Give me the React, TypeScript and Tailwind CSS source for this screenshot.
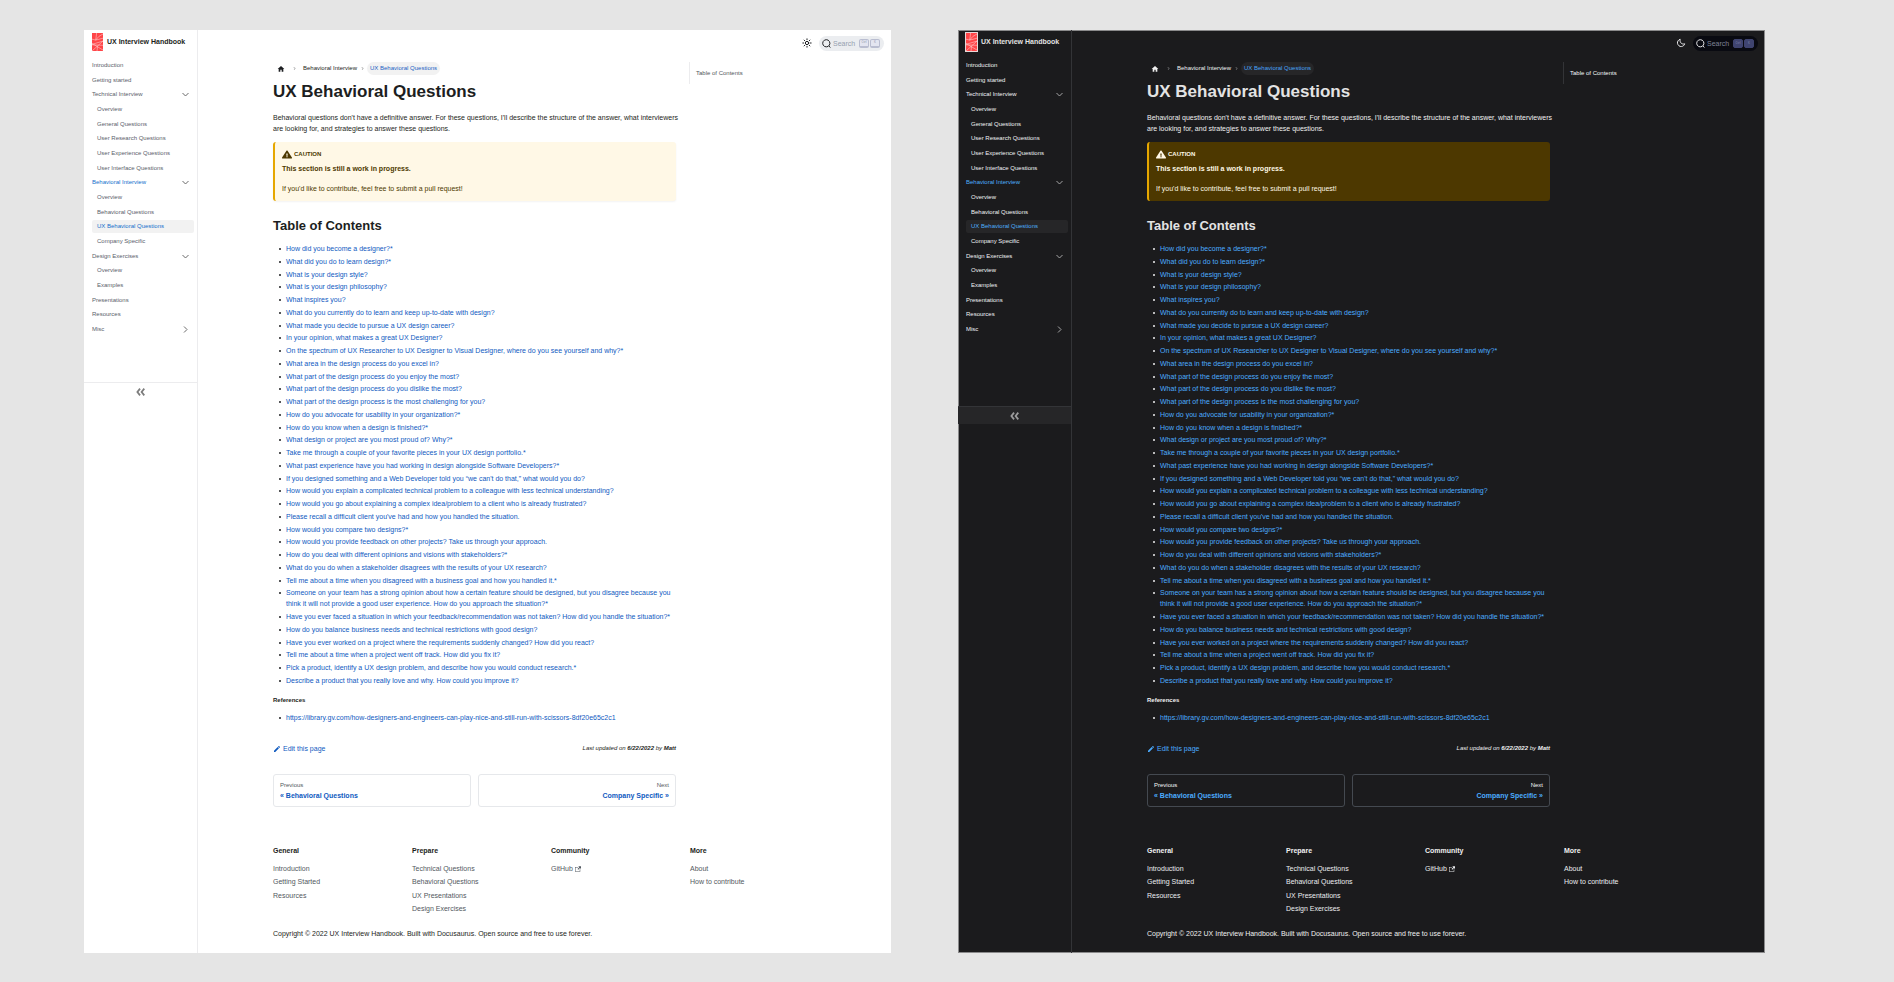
import React from "react";
import { MdHome, MdEdit } from "react-icons/md";

type Theme = {
  panel: string;
  line: string;
  text: string;
  heading: string;
  menu: string;
  active: string;
  activeBg: string;
  link: string;
  chevron: string;
  crumbBg: string;
  caution: string;
  collapseWrap: string;
  collapseIcon: string;
  search: string;
  searchIcon: string;
  searchText: string;
  key: string;
  card: string;
  label: string;
  footerLink: string;
  logo: string;
};

const light: Theme = {
  panel: "bg-white",
  line: "border-[#ececee]",
  text: "text-[#1c1e21]",
  heading: "text-[#1c1e21]",
  menu: "text-[#5a616b]",
  active: "text-[#1470cc]",
  activeBg: "bg-[#f2f2f2]",
  link: "text-[#0f5abf]",
  chevron: "text-[#6b6b6b]",
  crumbBg: "bg-[#f2f2f2] text-[#1a5fc4]",
  caution: "bg-[#fff8e6] text-[#4d3800] shadow-xs",
  collapseWrap: "mt-[45px] border-t border-[#ececee]",
  collapseIcon: "text-[#7c7c7c]",
  search: "bg-[#ebedf0]",
  searchIcon: "text-[#1c1e21]",
  searchText: "text-[#969faf]",
  key: "bg-[#e3e5f0] text-[#8d93a8] border-[#b9bdd0] border-b-2",
  card: "border-[#e6e8eb]",
  label: "text-[#525860]",
  footerLink: "text-[#525860]",
  logo: "border-transparent",
};

const dark: Theme = {
  panel: "bg-[#1b1b1d] ring-1 ring-inset ring-[#8a8a8b]",
  line: "border-[#333437]",
  text: "text-[#f0f0f0]",
  heading: "text-[#e3e3e3]",
  menu: "text-[#f0f1f3]",
  active: "text-[#4eaefa]",
  activeBg: "bg-[#262628]",
  link: "text-[#4cacff]",
  chevron: "text-[#a5a5a6]",
  crumbBg: "bg-[#262628] text-[#46a4fa]",
  caution: "bg-[#4d3800] text-[#fff8e6]",
  collapseWrap: "mt-[69px] border-t border-[#333437] bg-[#262628]",
  collapseIcon: "text-[#9c9c9d]",
  search: "bg-[#090a11]",
  searchIcon: "text-[#e8e8ea]",
  searchText: "text-[#7f8497]",
  key: "bg-[#3f4470] text-[#8389ad] border-[#3f4470]",
  card: "border-[#444950]",
  label: "text-[#f5f6f7]",
  footerLink: "text-[#ebedf0]",
  logo: "border-[#e8d8d8]",
};

type Item = { label: string; level: 1 | 2; open?: boolean; closed?: boolean; on?: boolean; current?: boolean };

const menu: Item[] = [
  { label: "Introduction", level: 1 },
  { label: "Getting started", level: 1 },
  { label: "Technical Interview", level: 1, open: true },
  { label: "Overview", level: 2 },
  { label: "General Questions", level: 2 },
  { label: "User Research Questions", level: 2 },
  { label: "User Experience Questions", level: 2 },
  { label: "User Interface Questions", level: 2 },
  { label: "Behavioral Interview", level: 1, open: true, on: true },
  { label: "Overview", level: 2 },
  { label: "Behavioral Questions", level: 2 },
  { label: "UX Behavioral Questions", level: 2, on: true, current: true },
  { label: "Company Specific", level: 2 },
  { label: "Design Exercises", level: 1, open: true },
  { label: "Overview", level: 2 },
  { label: "Examples", level: 2 },
  { label: "Presentations", level: 1 },
  { label: "Resources", level: 1 },
  { label: "Misc", level: 1, closed: true },
];

const questions: React.ReactNode[] = [
  "How did you become a designer?*",
  "What did you do to learn design?*",
  "What is your design style?",
  "What is your design philosophy?",
  "What inspires you?",
  "What do you currently do to learn and keep up-to-date with design?",
  "What made you decide to pursue a UX design career?",
  "In your opinion, what makes a great UX Designer?",
  "On the spectrum of UX Researcher to UX Designer to Visual Designer, where do you see yourself and why?*",
  "What area in the design process do you excel in?",
  "What part of the design process do you enjoy the most?",
  "What part of the design process do you dislike the most?",
  "What part of the design process is the most challenging for you?",
  "How do you advocate for usability in your organization?*",
  "How do you know when a design is finished?*",
  "What design or project are you most proud of? Why?*",
  "Take me through a couple of your favorite pieces in your UX design portfolio.*",
  "What past experience have you had working in design alongside Software Developers?*",
  "If you designed something and a Web Developer told you “we can't do that,” what would you do?",
  "How would you explain a complicated technical problem to a colleague with less technical understanding?",
  "How would you go about explaining a complex idea/problem to a client who is already frustrated?",
  "Please recall a difficult client you've had and how you handled the situation.",
  "How would you compare two designs?*",
  "How would you provide feedback on other projects? Take us through your approach.",
  "How do you deal with different opinions and visions with stakeholders?*",
  "What do you do when a stakeholder disagrees with the results of your UX research?",
  "Tell me about a time when you disagreed with a business goal and how you handled it.*",
  <>
    Someone on your team has a strong opinion about how a certain feature should be designed, but you disagree because you
    <br />
    think it will not provide a good user experience. How do you approach the situation?*
  </>,
  "Have you ever faced a situation in which your feedback/recommendation was not taken? How did you handle the situation?*",
  "How do you balance business needs and technical restrictions with good design?",
  "Have you ever worked on a project where the requirements suddenly changed? How did you react?",
  "Tell me about a time when a project went off track. How did you fix it?",
  "Pick a product, identify a UX design problem, and describe how you would conduct research.*",
  "Describe a product that you really love and why. How could you improve it?",
];

const footer = [
  { title: "General", links: ["Introduction", "Getting Started", "Resources"] },
  { title: "Prepare", links: ["Technical Questions", "Behavioral Questions", "UX Presentations", "Design Exercises"] },
  { title: "Community", links: ["GitHub"] },
  { title: "More", links: ["About", "How to contribute"] },
];

function Logo({ t }: { t: Theme }) {
  return (
    <svg viewBox="0 0 24 38" className={`h-5 w-[13px] shrink-0 border ${t.logo}`} preserveAspectRatio="none" aria-hidden="true">
      <rect width="24" height="38" fill="#ff4548" />
      <g fill="none" stroke="#ffd0d0" strokeWidth="1.2">
        <path d="M0 13 L8 15 L24 11 M10 0 Q9 10 8 15 M24 2 Q14 6 8 15" />
        <path d="M0 24 L24 17 M0 38 L24 17 M0 22 L24 36 M0 25 L24 26 M12 28 L11 38" />
      </g>
    </svg>
  );
}

function Chevron({ className }: { className: string }) {
  return (
    <svg viewBox="0 0 14 14" className={className} fill="none" stroke="currentColor" strokeWidth="2" aria-hidden="true">
      <path d="M1 4 L7 10 L13 4" />
    </svg>
  );
}

function Sidebar({ t }: { t: Theme }) {
  return (
    <aside className={`w-[114px] shrink-0 border-r ${t.line}`}>
      <a href="#" className={`mt-[2px] flex h-5 items-center gap-[3px] pl-[7px] text-[7px] font-bold whitespace-nowrap ${t.heading}`}>
        <Logo t={t} />
        UX Interview Handbook
      </a>
      <nav aria-label="Docs" className="mt-[6px] pr-[3px] pl-2">
        <ul className="grid min-h-[279px] auto-rows-fr text-[6px] leading-[13px]">
          {menu.map((m, i) => (
            <li key={i} className="flex items-center">
              <a
                href="#"
                className={`flex flex-1 items-center justify-between rounded-xs pr-[5px] whitespace-nowrap ${m.level === 2 ? "pl-[5px]" : ""} ${m.on ? t.active : t.menu} ${m.current ? t.activeBg : ""}`}
              >
                {m.label}
                {m.open && <Chevron className={`size-[7px] ${t.chevron}`} />}
                {m.closed && <Chevron className={`size-[7px] -rotate-90 ${t.chevron}`} />}
              </a>
            </li>
          ))}
        </ul>
      </nav>
      <button type="button" aria-label="Collapse sidebar" className={`flex h-[18px] w-full items-center justify-center ${t.collapseWrap}`}>
        <svg viewBox="0 0 20 18" className={`h-2 w-[9px] ${t.collapseIcon}`} fill="none" stroke="currentColor" strokeWidth="4" aria-hidden="true">
          <path d="M9 1.500 L3 9 L9 16.500 M18.500 1.500 L12.500 9 L18.500 16.500" />
        </svg>
      </button>
    </aside>
  );
}

function ModeIcon({ mode, className }: { mode: "light" | "dark"; className: string }) {
  if (mode === "light") {
    return (
      <svg viewBox="0 0 24 24" className={className} fill="none" stroke="currentColor" strokeWidth="2.4" strokeLinecap="round" aria-hidden="true">
        <circle cx="12" cy="12" r="4" />
        <path d="M12 2v2M12 20v2M2 12h2M20 12h2M5 5l1.400 1.400M17.600 17.600L19 19M5 19l1.400-1.400M17.600 6.400L19 5" />
      </svg>
    );
  }
  return (
    <svg viewBox="0 0 24 24" className={className} fill="none" stroke="currentColor" strokeWidth="2.4" strokeLinejoin="round" aria-hidden="true">
      <path d="M10 3 C5.500 4.500 3 8.500 3.500 12.500 C4.500 18 9 21 13 20.500 C17 20 20 17.500 21 14 C14 16 8.500 11 10 3 Z" />
    </svg>
  );
}

function TopBar({ t, mode }: { t: Theme; mode: "light" | "dark" }) {
  return (
    <header className="flex h-[26px] items-center justify-end gap-[7px] pr-[7px]">
      <button type="button" aria-label="Switch colour mode" className={t.searchIcon}>
        <ModeIcon mode={mode} className="size-[10px]" />
      </button>
      <button type="button" className={`flex h-[15px] w-[65px] items-center rounded-full px-[3px] ${t.search}`}>
        <svg viewBox="0 0 20 20" className={`size-[9px] ${t.searchIcon}`} fill="none" stroke="currentColor" strokeWidth="2.2" aria-hidden="true">
          <path d="M15 15 L18.500 19 M9.500 1.500 a8 8 0 1 0 .1 0 z" />
        </svg>
        <span className={`ml-[2px] text-[7px] leading-[9px] ${t.searchText}`}>Search</span>
        <span className="ml-auto flex gap-px pr-px text-[3px] leading-none">
          <kbd className={`flex h-[9px] w-[10px] items-center justify-center rounded-xs border font-sans ${t.key}`}>Ctrl</kbd>
          <kbd className={`flex h-[9px] w-[10px] items-center justify-center rounded-xs border font-sans ${t.key}`}>K</kbd>
        </span>
      </button>
    </header>
  );
}

const bulleted =
  "flex gap-[5px] before:mt-[5px] before:size-[2px] before:shrink-0 before:rounded-full before:bg-current before:content-['']";

function Article({ t }: { t: Theme }) {
  return (
    <main className="min-w-0">
      <nav aria-label="Breadcrumbs" className={`flex h-[13px] items-center text-[6px] whitespace-nowrap ${t.text}`}>
        <a href="#" aria-label="Home" className="ml-1">
          <MdHome className="size-2" />
        </a>
        <Chevron className="mr-[7px] ml-2 size-[3px] -rotate-90" />
        <a href="#">Behavioral Interview</a>
        <Chevron className="mr-[3px] ml-1 size-[3px] -rotate-90" />
        <a href="#" className={`rounded-full px-[3px] leading-[13px] ${t.crumbBg}`}>UX Behavioral Questions</a>
      </nav>
      <h1 className={`mt-[7px] text-[17px] leading-[20px] font-bold ${t.heading}`}>UX Behavioral Questions</h1>
      <p className={`mt-[10px] text-[7px] leading-[11px] whitespace-nowrap ${t.text}`}>
        Behavioral questions don't have a definitive answer. For these questions, I'll describe the structure of the answer, what interviewers
        <br />
        are looking for, and strategies to answer these questions.
      </p>
      <section className={`mt-2 rounded-[3px] border-l-2 border-[#e6a700] px-[7px] pt-[7px] pb-[7px] text-[7px] leading-[11px] ${t.caution}`}>
        <h2 className="flex items-center gap-[2px] text-[6px] font-bold">
          <svg viewBox="0 0 16 16" className="h-[9px] w-[10px]" preserveAspectRatio="none" fill="currentColor" fillRule="evenodd" aria-hidden="true">
            <path d="M8.890 1.500c-.17-.31-.5-.5-.89-.5s-.72.190-.89.500L.13 13.490a.98.980 0 0 0 0 1c.17.310.52.510.87.510h14c.36 0 .7-.190.880-.510.170-.310.170-.690 0-1L8.890 1.500zM9 13H7v-2h2v2zm0-3H7V6h2v4z" />
          </svg>
          CAUTION
        </h2>
        <p className="mt-[3px] font-bold">This section is still a work in progress.</p>
        <p className="mt-[9px]">If you'd like to contribute, feel free to submit a pull request!</p>
      </section>
      <h2 className={`mt-4 text-[13px] leading-[18px] font-bold ${t.heading}`}>Table of Contents</h2>
      <ul className={`mt-2 flex min-h-[443px] flex-col justify-between pl-[6px] text-[7px] leading-[11px] whitespace-nowrap ${t.text}`}>
        {questions.map((q, i) => (
          <li key={i} className={bulleted}>
            <a href="#" className={t.link}>{q}</a>
          </li>
        ))}
      </ul>
      <h3 className={`mt-[9px] text-[6px] leading-[11px] font-bold ${t.text}`}>References</h3>
      <ul className={`mt-[6px] pl-[6px] text-[7px] leading-[11px] ${t.text}`}>
        <li className={bulleted}>
          <a href="#" className={t.link}>https://library.gv.com/how-designers-and-engineers-can-play-nice-and-still-run-with-scissors-8df20e65c2c1</a>
        </li>
      </ul>
      <div className="mt-5 flex items-center justify-between leading-[11px]">
        <a href="#" className={`flex items-center gap-[2px] text-[7px] ${t.link}`}>
          <MdEdit className="size-2" />
          Edit this page
        </a>
        <p className={`text-[6px] italic ${t.text}`}>
          Last updated on <b>6/22/2022</b> by <b>Matt</b>
        </p>
      </div>
      <nav aria-label="Docs pages" className="mt-5 grid grid-cols-2 gap-[7px]">
        <a href="#" className={`rounded-[3px] border px-[6px] pt-[5px] pb-1 leading-[11px] ${t.card}`}>
          <span className={`block text-[6px] leading-[10px] ${t.label}`}>Previous</span>
          <span className={`block pb-px text-[7px] font-bold ${t.link}`}>« Behavioral Questions</span>
        </a>
        <a href="#" className={`rounded-[3px] border px-[6px] pt-[5px] pb-1 text-right leading-[11px] ${t.card}`}>
          <span className={`block text-[6px] leading-[10px] ${t.label}`}>Next</span>
          <span className={`block pb-px text-[7px] font-bold ${t.link}`}>Company Specific »</span>
        </a>
      </nav>
    </main>
  );
}

function Footer({ t }: { t: Theme }) {
  return (
    <footer className="mt-[38px] text-[7px]">
      <div className="grid grid-cols-4">
        {footer.map((c) => (
          <div key={c.title}>
            <h2 className={`leading-[12px] font-bold ${t.text}`}>{c.title}</h2>
            <ul className="mt-[5px] grid min-h-[54px] auto-rows-min content-start">
              {c.links.map((l, i) => (
                <li key={l} className={i % 2 === 1 ? "leading-[14px]" : "leading-[13px]"}>
                  <a href="#" className={`inline-flex items-center gap-[2px] ${t.footerLink}`}>
                    {l}
                    {l === "GitHub" && (
                      <svg viewBox="0 0 24 24" className="size-[6px]" fill="currentColor" aria-hidden="true">
                        <path d="M21 13v10h-21v-19h12v2h-10v15h17v-8h2zm3-12h-10.988l4.035 4-6.977 7.070 2.828 2.828 6.977-7.070 4.125 4.172v-11z" />
                      </svg>
                    )}
                  </a>
                </li>
              ))}
            </ul>
          </div>
        ))}
      </div>
      <p className={`mt-3 leading-[12px] ${t.text}`}>
        Copyright © 2022 UX Interview Handbook. Built with Docusaurus. Open source and free to use forever.
      </p>
    </footer>
  );
}

function Page({ t, mode }: { t: Theme; mode: "light" | "dark" }) {
  return (
    <div className={`flex flex-1 ${t.panel}`}>
      <Sidebar t={t} />
      <div className="min-w-0 flex-1 pb-[13px]">
        <TopBar t={t} mode={mode} />
        <div className="mt-[6px] pr-[62px] pl-[75px]">
          <div className="grid grid-cols-[403fr_140fr] gap-[13px]">
            <Article t={t} />
            <nav aria-label="On this page" className={`h-[22px] border-l pl-[6px] text-[6px] leading-[22px] ${t.line}`}>
              <a href="#" className={t.label}>Table of Contents</a>
            </nav>
          </div>
          <Footer t={t} />
        </div>
      </div>
    </div>
  );
}

export default function App() {
  return (
    <div className="flex min-h-screen items-start gap-[67px] bg-[#e5e5e5] pt-[30px] pr-[129px] pb-[28px] pl-[84px] font-['Liberation_Sans',Arial,sans-serif]">
      <Page t={light} mode="light" />
      <Page t={dark} mode="dark" />
    </div>
  );
}
